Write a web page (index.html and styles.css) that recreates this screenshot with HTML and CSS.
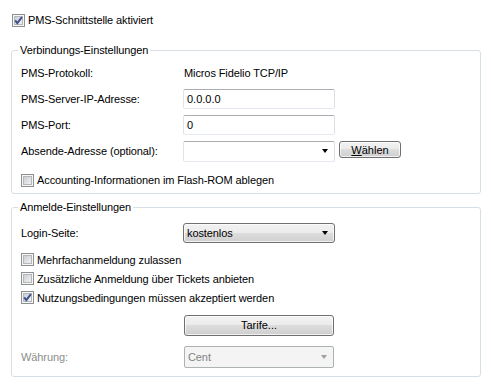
FILE: index.html
```html
<!DOCTYPE html>
<html lang="de">

<head>
    <meta charset="UTF-8">
    <title>PMS-Schnittstelle</title>
    <link rel="stylesheet" href="styles.css">
</head>

<body>
    <svg width="0" height="0" class="defs">
        <defs>
            <linearGradient id="boxfill" x1="0" y1="0" x2="1" y2="1">
                <stop offset="0" stop-color="#c9ccd1" />
                <stop offset="1" stop-color="#f3f3f3" />
            </linearGradient>
            <symbol id="box" viewBox="0 0 13 13">
                <rect x="0.5" y="0.5" width="12" height="12" fill="#f6f6f6" stroke="#8e8f8f" />
                <rect x="2.5" y="2.5" width="8" height="8" fill="url(#boxfill)" stroke="#b4b8bd" />
            </symbol>
            <symbol id="tick" viewBox="0 0 13 13">
                <path d="M3.2 6.4 L5.3 9.2 L9.9 3.2" fill="none" stroke="#3a4f8c" stroke-width="1.9" />
            </symbol>
        </defs>
    </svg>

    <div class="page">
        <label class="check top">
            <svg class="box" viewBox="0 0 13 13"><use href="#box" /><use href="#tick" /></svg>
            <span>PMS-Schnittstelle aktiviert</span>
        </label>

        <fieldset class="group first">
            <legend>Verbindungs-Einstellungen</legend>
            <div class="rows">
                <div class="row">
                    <span class="label">PMS-Protokoll:</span>
                    <span class="value">Micros Fidelio TCP/IP</span>
                </div>
                <div class="row">
                    <span class="label">PMS-Server-IP-Adresse:</span>
                    <input class="text" type="text" value="0.0.0.0">
                </div>
                <div class="row">
                    <span class="label">PMS-Port:</span>
                    <input class="text" type="text" value="0">
                </div>
                <div class="row">
                    <span class="label">Absende-Adresse (optional):</span>
                    <div class="combo edit">
                        <span class="combo-text"></span>
                        <span class="arrow"></span>
                    </div>
                    <button class="btn small"><u>W</u>ählen</button>
                </div>
                <label class="check row accounting">
                    <svg class="box" viewBox="0 0 13 13"><use href="#box" /></svg>
                    <span>Accounting-Informationen im Flash-ROM ablegen</span>
                </label>
            </div>
        </fieldset>

        <fieldset class="group second">
            <legend>Anmelde-Einstellungen</legend>
            <div class="rows">
                <div class="row">
                    <span class="label">Login-Seite:</span>
                    <div class="combo drop">
                        <span class="combo-text">kostenlos</span>
                        <span class="arrow"></span>
                    </div>
                </div>
                <div class="checks">
                    <label class="check">
                        <svg class="box" viewBox="0 0 13 13"><use href="#box" /></svg>
                        <span>Mehrfachanmeldung zulassen</span>
                    </label>
                    <label class="check">
                        <svg class="box" viewBox="0 0 13 13"><use href="#box" /></svg>
                        <span>Zusätzliche Anmeldung über Tickets anbieten</span>
                    </label>
                    <label class="check">
                        <svg class="box" viewBox="0 0 13 13"><use href="#box" /><use href="#tick" /></svg>
                        <span>Nutzungsbedingungen müssen akzeptiert werden</span>
                    </label>
                </div>
                <div class="row tarife">
                    <span class="label"></span>
                    <button class="btn wide">Tarife...</button>
                </div>
                <div class="row currency">
                    <span class="label disabled">Währung:</span>
                    <div class="combo off">
                        <span class="combo-text">Cent</span>
                        <span class="arrow"></span>
                    </div>
                </div>
            </div>
        </fieldset>
    </div>
</body>

</html>
```

FILE: styles.css
```css
body {
    margin: 0;
    background: #fff;
    font-family: "Liberation Sans", Arial, sans-serif;
    font-size: 11px;
    letter-spacing: -0.1px;
    color: #000;
}

.defs {
    position: absolute;
}

.page {
    width: 470px;
    padding: 10px 10px 0 11px;
}

.check {
    display: flex;
    align-items: center;
    height: 19px;
}

.check .box {
    width: 13px;
    height: 13px;
    margin-right: 3px;
    flex: none;
}

.check.top {
    height: 20px;
    margin-left: 1px;
}

.group {
    margin: 14px 0 0 0;
    padding: 0 0 0 6px;
    border: 1px solid #d5dfe5;
    border-radius: 3px;
    min-width: 0;
}

.group legend {
    padding: 0 2px;
    line-height: 13px;
}

.rows {
    padding-left: 3px;
}

.first .rows {
    padding-top: 3px;
}

.second {
    margin-top: 7px;
}

.second .rows {
    padding-top: 6px;
    padding-bottom: 6px;
}

.row {
    display: flex;
    align-items: center;
    height: 26px;
}

.label {
    width: 162px;
    flex: none;
}

.label.disabled {
    color: #8d8d8d;
}

.value {
    padding-left: 1px;
}

.accounting {
    margin-top: 3px;
}

.text {
    box-sizing: border-box;
    width: 152px;
    height: 20px;
    margin: 0;
    padding: 0 3px;
    font: inherit;
    border: 1px solid;
    border-color: #abadb3 #dbdfe6 #e3e9ef #e2e3ea;
    border-radius: 2px;
    outline: none;
}

.combo {
    box-sizing: border-box;
    width: 152px;
    height: 21px;
    display: flex;
    align-items: center;
    justify-content: space-between;
    padding: 0 6px 0 3px;
    border: 1px solid;
    border-radius: 2px;
}

.combo.edit {
    border-color: #abadb3 #dbdfe6 #e3e9ef #e2e3ea;
}

.combo.drop {
    height: 20px;
    border-color: #707070;
    border-radius: 3px;
    background: linear-gradient(#f2f2f2, #ebebeb 50%, #dddddd 50%, #cfcfcf);
    box-shadow: inset 0 0 0 1px rgba(255, 255, 255, 0.7);
}

.combo.off {
    width: 150px;
    height: 22px;
    margin-left: 1px;
    border-color: #adb2b5;
    background: #f4f4f4;
    color: #838383;
}

.arrow {
    width: 0;
    height: 0;
    border-left: 3.5px solid transparent;
    border-right: 3.5px solid transparent;
    border-top: 4px solid #000;
}

.combo.off .arrow {
    border-top-color: #a0a0a0;
}

.btn {
    box-sizing: border-box;
    margin: 0;
    padding: 0;
    font: inherit;
    color: #000;
    border: 1px solid #707070;
    border-radius: 3px;
    background: linear-gradient(#f2f2f2, #ebebeb 50%, #dddddd 50%, #cfcfcf);
    box-shadow: inset 0 0 0 1px rgba(255, 255, 255, 0.7);
}

.btn.small {
    width: 62px;
    height: 17px;
    margin: -3px 0 0 4px;
}

.btn.wide {
    width: 150px;
    height: 21px;
    margin-left: 1px;
}

.checks {
    margin-top: 4px;
}

.tarife {
    margin-top: 5px;
}

.currency {
    margin-top: 6px;
}
```
